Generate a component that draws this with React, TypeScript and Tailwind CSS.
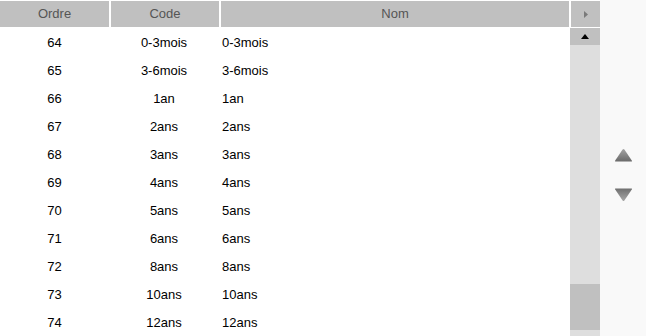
import React from "react";

const ROWS = [
  { ordre: 64, code: "0-3mois", nom: "0-3mois" },
  { ordre: 65, code: "3-6mois", nom: "3-6mois" },
  { ordre: 66, code: "1an", nom: "1an" },
  { ordre: 67, code: "2ans", nom: "2ans" },
  { ordre: 68, code: "3ans", nom: "3ans" },
  { ordre: 69, code: "4ans", nom: "4ans" },
  { ordre: 70, code: "5ans", nom: "5ans" },
  { ordre: 71, code: "6ans", nom: "6ans" },
  { ordre: 72, code: "8ans", nom: "8ans" },
  { ordre: 73, code: "10ans", nom: "10ans" },
  { ordre: 74, code: "12ans", nom: "12ans" },
];

function Arrow({ down }: { down?: boolean }) {
  return (
    <svg width="19" height="15" viewBox="0 0 19 15">
      <defs>
        <linearGradient id={down ? "gd" : "gu"} x1="0" y1="0" x2="0" y2="1">
          <stop offset="0" stopColor={down ? "#6f6f6f" : "#a4a4a4"} />
          <stop offset="1" stopColor={down ? "#a8a8a8" : "#6a6a6a"} />
        </linearGradient>
      </defs>
      {down ? (
        <path d="M1.5 1.5 Q0.5 1.5 1.2 2.6 L8.6 13.6 Q9.5 14.6 10.4 13.6 L17.8 2.6 Q18.5 1.5 17.5 1.5 Z" fill="url(#gd)" />
      ) : (
        <path d="M1.5 13.5 Q0.5 13.5 1.2 12.4 L8.6 1.4 Q9.5 0.4 10.4 1.4 L17.8 12.4 Q18.5 13.5 17.5 13.5 Z" fill="url(#gu)" />
      )}
    </svg>
  );
}

export default function App() {
  return (
    <div
      className="w-[646px] h-[336px] overflow-hidden flex bg-[#f9f9f9] text-[13px]"
      style={{ fontFamily: '"Liberation Sans", Arial, sans-serif' }}
    >
      {/* Grid */}
      <div className="w-[600px] h-full bg-white flex flex-col">
        {/* Header */}
        <div className="flex gap-[2px] mt-[1px] h-[26px] text-[#555]">
          <div className="w-[109px] bg-[#c0c0c0] flex items-center justify-center">Ordre</div>
          <div className="w-[108px] bg-[#c0c0c0] flex items-center justify-center">Code</div>
          <div className="w-[348px] bg-[#c0c0c0] flex items-center justify-center">Nom</div>
          <div className="w-[29px] bg-[#c0c0c0] flex items-center justify-center">
            <svg width="4" height="7" viewBox="0 0 4 7">
              <path d="M0 0 L4 3.5 L0 7 Z" fill="#7a7a7a" />
            </svg>
          </div>
        </div>

        {/* Body */}
        <div className="flex flex-1 mt-[1px] min-h-0">
          <div className="w-[570px] pt-[1px] text-black">
            {ROWS.map((r) => (
              <div key={r.ordre} className="flex h-[28px] items-center">
                <div className="w-[109px] text-center">{r.ordre}</div>
                <div className="w-[110px] text-center">{r.code}</div>
                <div className="pl-[3px]">{r.nom}</div>
              </div>
            ))}
          </div>

          {/* Scrollbar */}
          <div className="w-[30px] flex flex-col bg-[#dedede]">
            <div className="h-[17px] bg-[#c0c0c0] flex items-center justify-center">
              <svg width="8" height="5" viewBox="0 0 8 5">
                <path d="M4 0 L8 5 L0 5 Z" fill="#000" />
              </svg>
            </div>
            <div className="h-[239px]" />
            <div className="h-[46px] bg-[#c0c0c0]" />
          </div>
        </div>
      </div>

      {/* Side arrows */}
      <div className="flex-1 flex flex-col items-center pt-[148px] gap-[24px]">
        <Arrow />
        <Arrow down />
      </div>
    </div>
  );
}
